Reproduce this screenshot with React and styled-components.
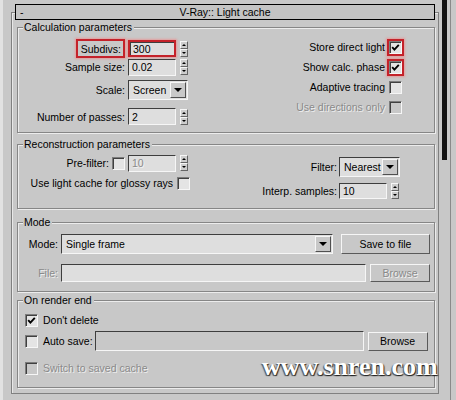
import React from 'react';
import styled, { createGlobalStyle } from 'styled-components';

const GlobalStyle = createGlobalStyle`
  html, body { margin: 0; padding: 0; background: #c8c8c8; }
  body {
    font-family: "Liberation Sans", Arial, sans-serif;
    font-size: 10.5px;
    color: #000;
  }
`;

const Screen = styled.div`
  position: relative;
  display: flex;
  width: 456px;
  height: 400px;
  overflow: hidden;
  background: #c8c8c8;
`;

const EdgeStrip = styled.div`
  flex: none;
  width: 3px;
  background: #e2e2e2;
`;

const Rollout = styled.div`
  flex: none;
  margin: 12px 0 0 8px;
  width: 426px;
  height: 380px;
  border: 1px solid #808080;
  box-shadow: inset 1px 1px 0 #e8e8e8;
  display: flex;
  flex-direction: column;
`;

const TitleBar = styled.div`
  height: 14px;
  margin: -9px 3px 0;
  border: 1px solid #000;
  background: #c4c4c4;
  display: grid;
  grid-template-columns: 1fr auto 1fr;
  align-items: center;
  line-height: 14px;
`;

const Collapse = styled.span`
  padding-left: 4px;
`;

const Group = styled.fieldset`
  margin: ${p => p.$mt}px 3px 0 5px;
  padding: ${p => p.$pad};
  min-width: 0;
  border: 1px solid #868686;
  box-shadow: inset 1px 1px 0 #ececec, 1px 1px 0 #ececec;
`;

const Legend = styled.legend`
  margin-left: 5px;
  padding: 0 2px 0 1px;
  line-height: 13px;
  background: #c8c8c8;
`;

const Split = styled.div`
  display: flex;
  justify-content: space-between;
  align-items: flex-start;
`;

const FormGrid = styled.div`
  display: grid;
  grid-template-columns: ${p => p.$cols};
  grid-template-rows: ${p => p.$rows};
  column-gap: ${p => p.$gap ?? 3}px;
  row-gap: ${p => p.$rowGap ?? 0}px;
  align-items: center;
  justify-items: start;
  padding: ${p => p.$pad || 0};
  margin-right: ${p => p.$mr || 0}px;
`;

const Stack = styled.div`
  display: flex;
  flex-direction: column;
  align-items: flex-end;
  width: ${p => p.$w}px;
  padding-top: ${p => p.$pt || 0}px;
`;

const Row = styled.div`
  display: flex;
  align-items: center;
  height: ${p => p.$h || 20}px;
  margin-top: ${p => p.$mt || 0}px;
  margin-right: ${p => p.$mr || 0}px;
  padding-left: ${p => p.$pl || 0}px;
`;

const Label = styled.span`
  justify-self: end;
  white-space: nowrap;
  width: ${p => (p.$w ? p.$w + 'px' : 'auto')};
  text-align: ${p => (p.$w ? 'right' : 'left')};
  margin-right: ${p => p.$mr || 0}px;
  margin-left: ${p => p.$ml || 0}px;
  color: ${p => (p.$off ? '#8a8a8a' : '#000')};
  text-shadow: ${p => (p.$off ? '1px 1px 0 #eeeeee' : 'none')};
`;

const Mark = styled.span`
  box-sizing: border-box;
  display: inline-flex;
  align-items: center;
  justify-content: center;
  justify-self: ${p => p.$self || 'end'};
  height: ${p => p.$h}px;
  padding: ${p => p.$pad || 0};
  border: 2px solid #c4222a;
  box-shadow: 0 0 2px 1px rgba(238, 140, 140, 0.75);
`;

const Field = styled.div`
  box-sizing: border-box;
  flex: none;
  width: ${p => p.$w}px;
  height: ${p => p.$h || 17}px;
  padding: 0 3px;
  display: flex;
  align-items: center;
  white-space: nowrap;
  background: ${p => (p.$flat ? '#c8c8c8' : '#dedede')};
  border: ${p => (p.$marked ? '2px solid #c4222a' : '1px solid')};
  border-color: ${p => (p.$marked ? '#c4222a' : '#3e3e3e #f6f6f6 #f6f6f6 #3e3e3e')};
  box-shadow: ${p =>
    p.$marked ? 'inset 1px 1px 0 #3e3e3e, 0 0 2px 1px rgba(238,140,140,0.75)' : 'none'};
  color: ${p => (p.$off ? '#8a8a8a' : '#000')};
  text-shadow: ${p => (p.$off ? '1px 1px 0 #f2f2f2' : 'none')};
  margin-left: ${p => p.$ml || 0}px;
`;

const Control = styled.span`
  display: inline-flex;
  align-items: center;
`;

const Spinner = styled.span`
  flex: none;
  display: inline-flex;
  flex-direction: column;
  width: 8px;
  height: 16px;
  margin-left: 4px;
`;

const SpinHalf = styled.span`
  flex: 1;
  display: flex;
  align-items: center;
  justify-content: center;
  border: 1px solid;
  border-color: #f6f6f6 #646464 #646464 #f6f6f6;
  background: #cdcdcd;
  &::after {
    content: '';
    border-left: 2px solid transparent;
    border-right: 2px solid transparent;
    ${p => (p.$down ? 'border-top: 2px solid #000;' : 'border-bottom: 2px solid #000;')}
  }
`;

const Select = styled.div`
  box-sizing: border-box;
  flex: none;
  width: ${p => p.$w}px;
  height: 20px;
  display: flex;
  align-items: center;
  padding-left: 4px;
  border: 1px solid;
  border-color: #3e3e3e #f6f6f6 #f6f6f6 #3e3e3e;
  background: #dedede;
`;

const SelectText = styled.span`
  flex: 1;
`;

const DropButton = styled.span`
  box-sizing: border-box;
  width: 16px;
  height: 16px;
  margin-right: 1px;
  display: flex;
  align-items: center;
  justify-content: center;
  border: 1px solid;
  border-color: #f6f6f6 #505050 #505050 #f6f6f6;
  background: #c8c8c8;
  &::after {
    content: '';
    border-left: 4px solid transparent;
    border-right: 4px solid transparent;
    border-top: 4px solid #000;
  }
`;

const Button = styled.div`
  box-sizing: border-box;
  flex: none;
  width: ${p => p.$w}px;
  height: ${p => p.$h || 20}px;
  margin-left: ${p => p.$ml || 0}px;
  display: flex;
  align-items: center;
  justify-content: center;
  border: 1px solid;
  border-color: #f6f6f6 #5a5a5a #5a5a5a #f6f6f6;
  background: #c8c8c8;
  color: ${p => (p.$off ? '#8a8a8a' : '#000')};
  text-shadow: ${p => (p.$off ? '1px 1px 0 #f2f2f2' : 'none')};
`;

const Box = styled.span`
  box-sizing: border-box;
  flex: none;
  justify-self: center;
  width: 13px;
  height: 13px;
  display: inline-flex;
  align-items: center;
  justify-content: center;
  border: 1px solid;
  border-color: #7c7c7c #f6f6f6 #f6f6f6 #7c7c7c;
  box-shadow: inset 1px 1px 0 #404040;
  background: ${p => (p.$off ? '#c8c8c8' : '#e4e4e4')};
  margin-left: ${p => p.$ml || 0}px;
`;

const ScrollTrack = styled.div`
  flex: 1;
  display: flex;
  align-items: flex-start;
  padding-left: 3px;
`;

const Thumb = styled.div`
  width: 5px;
  height: 160px;
  background: #111;
`;

const Rail = styled.div`
  width: 1px;
  height: 100%;
  margin-left: 3px;
  background: #8a8a8a;
`;

const Watermark = styled.div`
  position: absolute;
  left: 262px;
  top: 354px;
  font-family: "Liberation Serif", "Times New Roman", serif;
  font-weight: bold;
  font-size: 26px;
  line-height: 26px;
  color: #fff;
  text-shadow: 1px 1px 1px #222, -1px 1px 1px #555;
`;

function Check({ checked, off, ml }) {
  return (
    <Box $off={off} $ml={ml}>
      {checked && (
        <svg width="9" height="9" viewBox="0 0 9 9">
          <path d="M1.2 4.2 L3.4 6.6 L7.8 1.8" fill="none" stroke="#000" strokeWidth="1.9" />
        </svg>
      )}
    </Box>
  );
}

function Spin({ value, w = 48, h, marked, off }) {
  return (
    <Control>
      <Field $w={w} $h={h} $marked={marked} $off={off}>{value}</Field>
      <Spinner>
        <SpinHalf />
        <SpinHalf $down />
      </Spinner>
    </Control>
  );
}

function Dropdown({ value, w }) {
  return (
    <Select $w={w}>
      <SelectText>{value}</SelectText>
      <DropButton />
    </Select>
  );
}

export default function App() {
  return (
    <>
      <GlobalStyle />
      <Screen>
        <EdgeStrip />
        <Rollout>
          <TitleBar>
            <Collapse>-</Collapse>
            <span>V-Ray:: Light cache</span>
            <span />
          </TitleBar>

          <Group $mt={1} $pad="3px 0 0">
            <Legend>Calculation parameters</Legend>
            <Split>
              <FormGrid $cols="107px auto" $rows="19px 18px 27px 27px" $pad="2px 0 2px">
                <Mark $h={19} $pad="0 2px 0 3px">Subdivs:</Mark>
                <Spin value="300" marked />
                <Label>Sample size:</Label>
                <Spin value="0.02" />
                <Label>Scale:</Label>
                <Dropdown value="Screen" w={60} />
                <Label>Number of passes:</Label>
                <Spin value="2" />
              </FormGrid>
              <FormGrid $cols="auto 17px" $rows="20px 20px 20px 20px" $gap={2} $mr={30}>
                <Label>Store direct light</Label>
                <Mark $h={17} $self="center"><Check checked /></Mark>
                <Label>Show calc. phase</Label>
                <Mark $h={17} $self="center"><Check checked /></Mark>
                <Label>Adaptive tracing</Label>
                <Check />
                <Label $off>Use directions only</Label>
                <Check off />
              </FormGrid>
            </Split>
          </Group>

          <Group $mt={5} $pad="0">
            <Legend>Reconstruction parameters</Legend>
            <Split>
              <Stack $w={172} $pt={2}>
                <Row $mr={2}>
                  <Label $mr={3}>Pre-filter:</Label>
                  <Check />
                  <Field $w={48} $ml={3} $off>10</Field>
                  <Spinner>
                    <SpinHalf />
                    <SpinHalf $down />
                  </Spinner>
                </Row>
                <Row>
                  <Label $mr={4}>Use light cache for glossy rays</Label>
                  <Check />
                </Row>
              </Stack>
              <FormGrid $cols="auto auto" $rows="20px 20px" $gap={2} $rowGap={4} $pad="6px 0 7px" $mr={34}>
                <Label>Filter:</Label>
                <Dropdown value="Nearest" w={61} />
                <Label>Interp. samples:</Label>
                <Spin value="10" h={16} />
              </FormGrid>
            </Split>
          </Group>

          <Group $mt={7} $pad="5px 0 9px">
            <Legend>Mode</Legend>
            <Row>
              <Label $w={40} $mr={3}>Mode:</Label>
              <Dropdown value="Single frame" w={272} />
              <Button $w={89} $ml={8}>Save to file</Button>
            </Row>
            <Row $h={18} $mt={10}>
              <Label $w={40} $mr={3} $off>File:</Label>
              <Field $w={305} $h={18} />
              <Button $w={60} $h={18} $ml={4} $off>Browse</Button>
            </Row>
          </Group>

          <Group $mt={2} $pad="3px 0 9px">
            <Legend>On render end</Legend>
            <Row $pl={7}>
              <Check checked />
              <Label $ml={5}>Don't delete</Label>
            </Row>
            <Row $pl={7} $mt={1}>
              <Check />
              <Label $ml={5} $mr={2}>Auto save:</Label>
              <Field $w={269} $h={20} $flat />
              <Button $w={60} $h={19} $ml={4}>Browse</Button>
            </Row>
            <Row $pl={7} $mt={7}>
              <Check off />
              <Label $ml={5} $off>Switch to saved cache</Label>
            </Row>
          </Group>
        </Rollout>
        <ScrollTrack>
          <Thumb />
          <Rail />
        </ScrollTrack>
        <Watermark>www.snren.com</Watermark>
      </Screen>
    </>
  );
}
